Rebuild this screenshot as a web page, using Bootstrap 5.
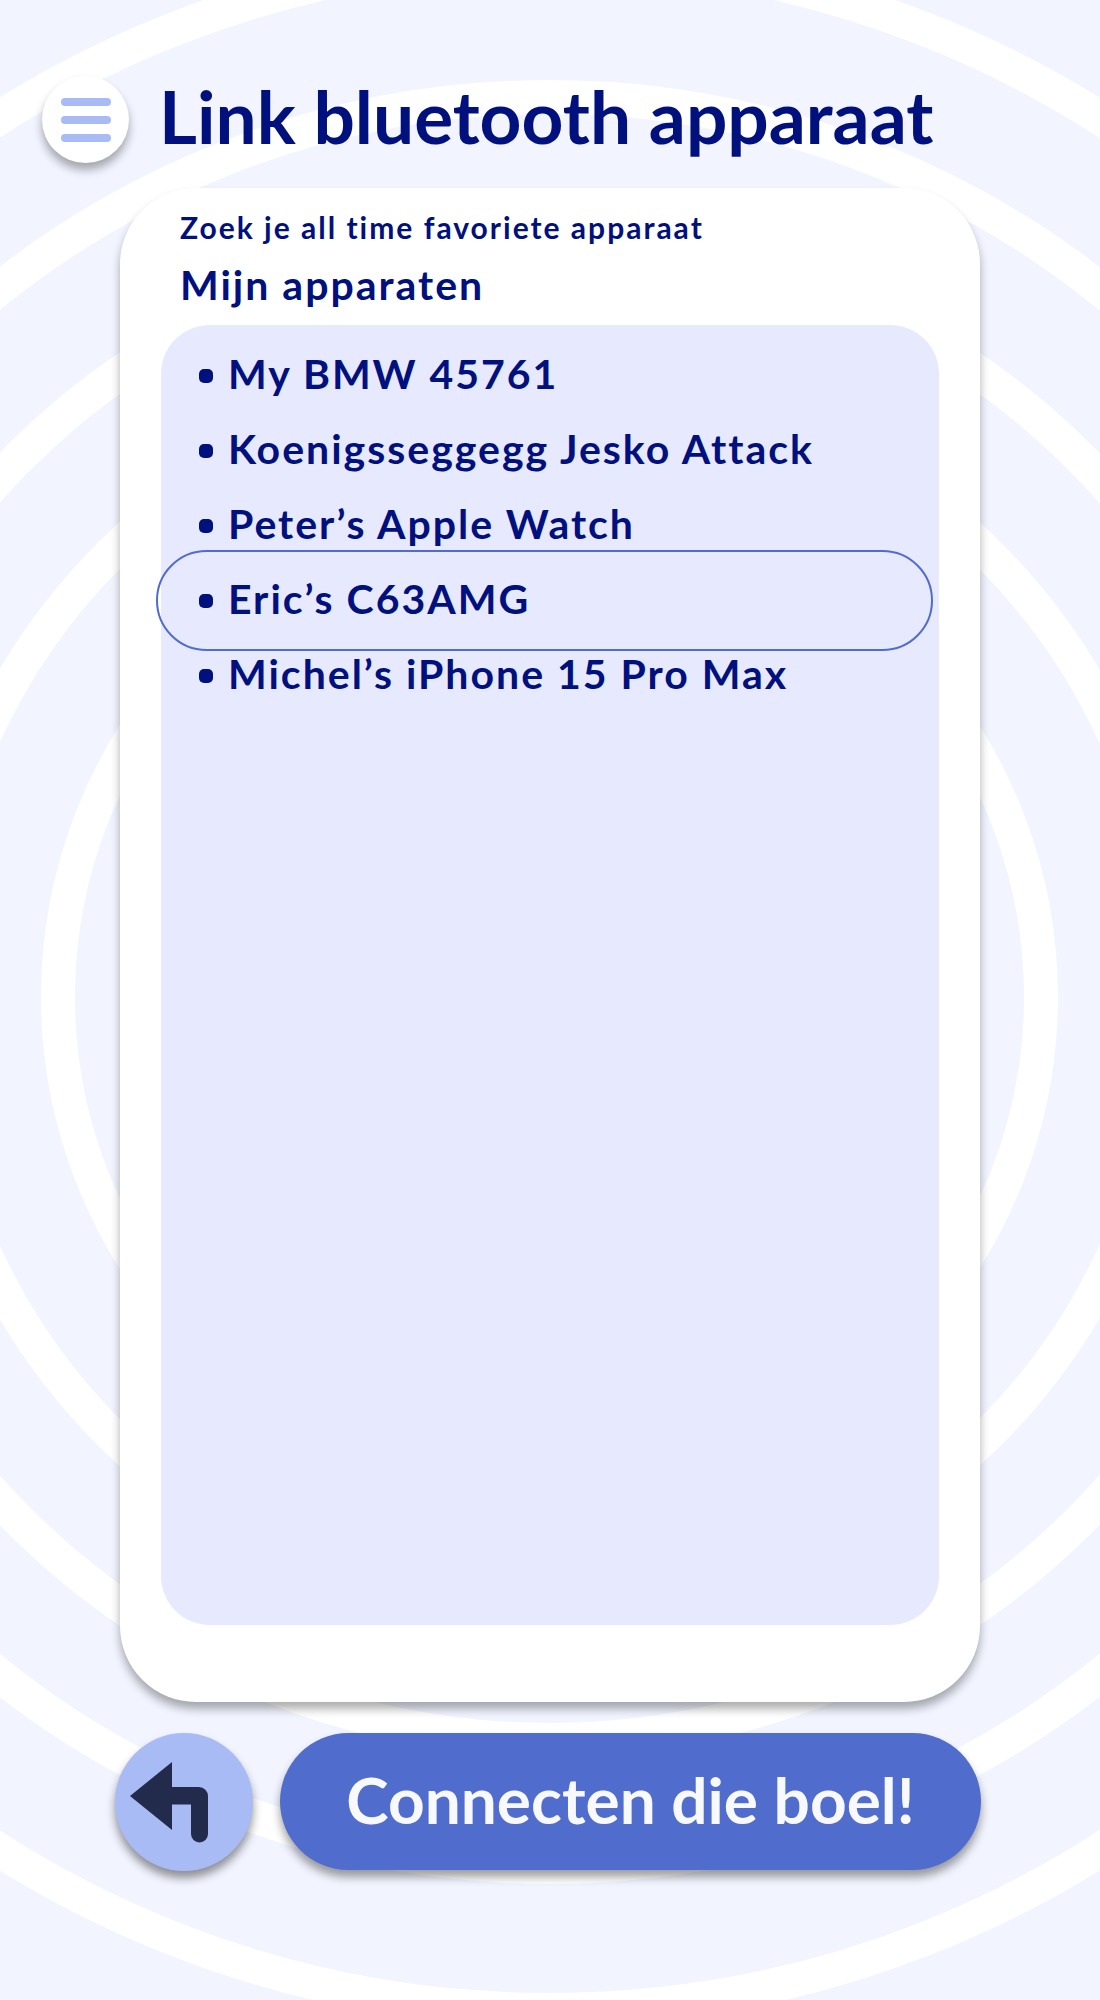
<!DOCTYPE html>
<html lang="nl">
<head>
<meta charset="utf-8">
<meta name="viewport" content="width=device-width, initial-scale=1">
<title>Link bluetooth apparaat</title>
<link href="https://cdn.jsdelivr.net/npm/bootstrap@5.3.0/dist/css/bootstrap.min.css" rel="stylesheet">
<style>
  :root { --ink: #00107c; --sky: #a9bbf5; --royal: #506ccc; --haze: #f2f4ff; --lilac: #e7e9ff; }
  body { font-family: Lato, "Open Sans", sans-serif; font-weight: 700; color: var(--ink); background: var(--haze); }
  .screen { isolation: isolate; overflow: hidden; }
  .rings { z-index: -1; }
  .topbar { padding: 76px 42px 0; gap: 30px; }
  .menu-btn { width: 87px; height: 87px; box-shadow: 0 7px 10px rgba(0, 0, 0, .32); }
  .screen-title { font-size: 73px; line-height: 80px; font-weight: 700; padding-bottom: 7px; }
  .device-card { margin: 25px 120px 0; padding: 19px 41px 77px; border-radius: 76px; box-shadow: 0 7px 10px rgba(0, 0, 0, .32); }
  .search-hint { font-size: 30px; line-height: 40px; letter-spacing: 2px; padding-left: 19px; }
  .section-title { font-size: 41px; line-height: 50px; letter-spacing: 2px; font-weight: 700; padding: 13px 0 0 19px; margin-bottom: 15px; }
  .device-panel { background: var(--lilac); border-radius: 49px; padding: 13px 0; }
  .device { height: 75px; padding: 0 38px 3px; gap: 15px; font-size: 41px; line-height: 50px; letter-spacing: 2px; color: var(--ink); font-weight: 700; }
  .device-dot { width: 14px; height: 14px; margin-top: 4px; border-radius: 5px; background: var(--ink); }
  .device[aria-pressed="true"]::before { content: ""; position: absolute; inset: -13px 6px -13px -5px; border: 2px solid var(--royal); border-radius: 51px; }
  .actions { padding: 31px 119px 129px 115px; gap: 27px; }
  .back-btn { width: 138px; height: 138px; background: var(--sky); box-shadow: 0 7px 10px rgba(0, 0, 0, .42); }
  .connect-btn { height: 137px; border-radius: 69px; background: var(--royal); color: #f8f9ff; font-size: 64px; line-height: 80px; font-weight: 700; box-shadow: 0 7px 10px rgba(0, 0, 0, .38); }
</style>
</head>
<body>
<div class="screen position-relative d-flex flex-column min-vh-100">
  <svg class="rings position-absolute top-0 start-0 w-100 h-100" viewBox="0 0 1100 2000" preserveAspectRatio="xMidYMid slice" fill="none" stroke="#fff" stroke-width="34" aria-hidden="true">
    <circle cx="549.5" cy="997" r="491.5"/>
    <circle cx="549.5" cy="994" r="621.5"/>
    <circle cx="549.5" cy="989" r="751"/>
    <circle cx="549.5" cy="982" r="885"/>
    <circle cx="549.5" cy="984" r="1026"/>
  </svg>

  <header class="topbar d-flex align-items-center">
    <button type="button" class="menu-btn btn bg-white rounded-circle border-0 p-0 flex-shrink-0 d-flex align-items-center justify-content-center" aria-label="Menu">
      <svg width="50" height="44" viewBox="0 0 50 44" fill="#a9bbf5" aria-hidden="true">
        <rect width="50" height="8" y="0" rx="4"/><rect width="50" height="8" y="18" rx="4"/><rect width="50" height="8" y="36" rx="4"/>
      </svg>
    </button>
    <h1 class="screen-title mb-0">Link bluetooth apparaat</h1>
  </header>

  <main class="device-card bg-white d-flex flex-column flex-grow-1">
    <p class="search-hint mb-0">Zoek je all time favoriete apparaat</p>
    <h2 class="section-title">Mijn apparaten</h2>
    <ul class="device-panel list-unstyled mb-0 flex-grow-1">
      <li><button type="button" class="device btn border-0 rounded-0 w-100 d-flex align-items-center text-start position-relative" aria-pressed="false"><span class="device-dot"></span>My BMW 45761</button></li>
      <li><button type="button" class="device btn border-0 rounded-0 w-100 d-flex align-items-center text-start position-relative" aria-pressed="false"><span class="device-dot"></span>Koenigsseggegg Jesko Attack</button></li>
      <li><button type="button" class="device btn border-0 rounded-0 w-100 d-flex align-items-center text-start position-relative" aria-pressed="false"><span class="device-dot"></span>Peter’s Apple Watch</button></li>
      <li><button type="button" class="device btn border-0 rounded-0 w-100 d-flex align-items-center text-start position-relative" aria-pressed="true"><span class="device-dot"></span>Eric’s C63AMG</button></li>
      <li><button type="button" class="device btn border-0 rounded-0 w-100 d-flex align-items-center text-start position-relative" aria-pressed="false"><span class="device-dot"></span>Michel’s iPhone 15 Pro Max</button></li>
    </ul>
  </main>

  <footer class="actions d-flex">
    <button type="button" class="back-btn btn rounded-circle border-0 p-0 flex-shrink-0" aria-label="Terug">
      <svg class="d-block" width="138" height="138" viewBox="0 0 138 138" aria-hidden="true">
        <path fill="#232b4d" d="M15 63 57 29V54H84A9 9 0 0 1 93 63V101A8.500 8.500 0 0 1 76 101V71.500H57V97Z"/>
      </svg>
    </button>
    <button type="button" class="connect-btn btn border-0 flex-grow-1 px-0 pt-0 pb-1">Connecten die boel!</button>
  </footer>
</div>
<script src="https://cdn.jsdelivr.net/npm/bootstrap@5.3.0/dist/js/bootstrap.bundle.min.js"></script>
</body>
</html>
